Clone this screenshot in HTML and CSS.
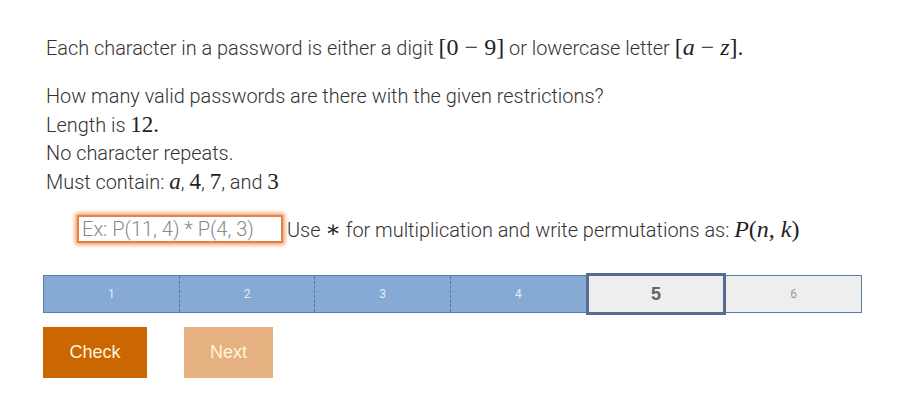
FILE: index.html
```html
<!DOCTYPE html>
<html lang="en">
<head>
<meta charset="UTF-8">
<title>Password permutations</title>
<link rel="stylesheet" href="styles.css">
</head>
<body>
<div class="question">
  <p class="intro">Each character in a password is either a digit <span class="math big">[0 &minus; 9]</span> or lowercase letter <span class="math big">[<i>a</i> &minus; <i>z</i>].</span></p>

  <div class="rules">
    <p>How many valid passwords are there with the given restrictions?</p>
    <p>Length is <span class="math">12.</span></p>
    <p>No character repeats.</p>
    <p>Must contain: <span class="math"><i>a</i></span>, <span class="math">4</span>, <span class="math">7</span>, and <span class="math">3</span></p>
  </div>

  <div class="answer-row">
    <input class="answer" type="text" placeholder="Ex: P(11, 4) * P(4, 3)">
    <span class="hint">Use <span class="math">&lowast;</span> for multiplication and write permutations as: <span class="math big"><i>P</i>(<i>n</i>, <i>k</i>)</span></span>
  </div>

  <div class="progress">
    <div class="step done">1</div>
    <div class="step done">2</div>
    <div class="step done">3</div>
    <div class="step done">4</div>
    <div class="step current">5</div>
    <div class="step">6</div>
  </div>

  <div class="buttons">
    <button class="btn btn-check">Check</button>
    <button class="btn btn-next">Next</button>
  </div>
</div>
</body>
</html>
```

FILE: styles.css
```css
* {
  box-sizing: border-box;
  margin: 0;
  padding: 0;
}

body {
  font-family: Roboto, "Liberation Sans", sans-serif;
  font-weight: 300;
  color: #333;
  background-color: #fff;
  font-size: 19.9px;
}

.question {
  padding: 33px 0 0 43px;
  width: 862px;
}

.math {
  font-family: "Liberation Serif", "DejaVu Serif", serif;
  font-weight: normal;
  font-size: 23px;
  color: #222;
}

.math.big {
  font-size: 24px;
}

.intro {
  padding-left: 3px;
  line-height: 28px;
}

.rules {
  padding-left: 3px;
  margin-top: 20px;
  line-height: 28px;
}

.answer-row {
  display: flex;
  align-items: center;
  height: 30px;
  margin-top: 17px;
  padding-left: 34px;
}

.answer {
  width: 206px;
  height: 28px;
  border: 2px solid #e2824a;
  box-shadow: 0 0 4px 2px #f0a56e;
  font-family: Roboto, sans-serif;
  font-weight: 300;
  font-size: 20px;
  padding: 0 3px;
  color: #333;
  outline: none;
}

.answer::placeholder {
  color: #888;
}

.hint {
  margin-left: 4px;
}

.progress {
  display: flex;
  margin-top: 31px;
  height: 38px;
  border: 1px solid #5b7ca6;
  width: 819px;
}

.step {
  flex: 1;
  display: flex;
  justify-content: center;
  align-items: center;
  font-family: Roboto, "Liberation Sans", sans-serif;
  font-weight: normal;
  font-size: 12px;
  color: #999;
  background-color: #eee;
}

.step.done {
  background-color: #85aad3;
  color: #e4edf7;
  border-right: 1px dashed #55779f;
}

.step.done:nth-child(4) {
  border-right: none;
}

.step.current {
  margin: -3px 0;
  border: 3px solid #566d90;
  font-family: "Liberation Sans", Arial, sans-serif;
  font-size: 18px;
  font-weight: bold;
  color: #666;
  background-color: #eee;
}

.buttons {
  display: flex;
  gap: 37px;
  margin-top: 14px;
}

.btn {
  border: none;
  height: 51px;
  font-family: "Liberation Sans", Arial, sans-serif;
  font-size: 18px;
  color: #fff5dc;
  padding: 0 26px;
}

.btn-check {
  background-color: #cc6600;
  width: 104px;
}

.btn-next {
  background-color: #e6b180;
  width: 89px;
}
```
